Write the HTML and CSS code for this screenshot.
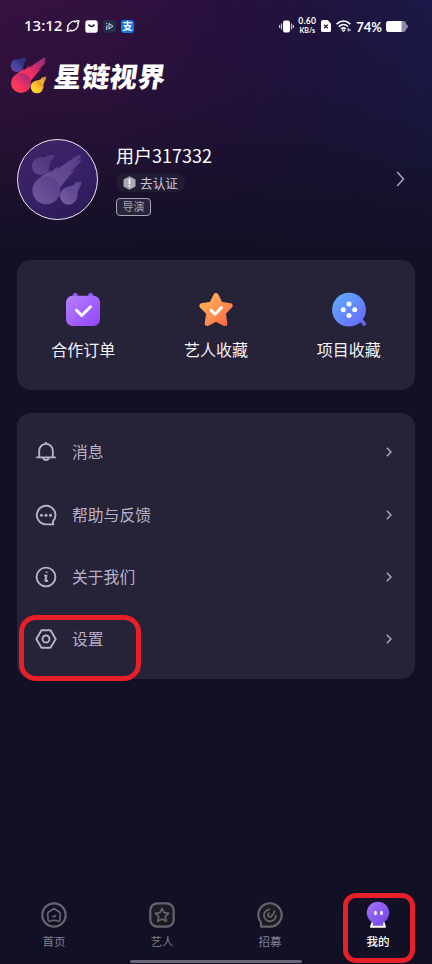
FILE: index.html
```html
<!DOCTYPE html>
<html lang="zh-CN">
<head>
<meta charset="utf-8">
<title>星链视界</title>
<link rel="stylesheet" href="styles.css">
</head>
<body>
<svg class="defs" width="0" height="0">
  <defs>
    <linearGradient id="red" x1="0" y1="1" x2="1" y2="0"><stop offset="0" stop-color="#ff4a4a"/><stop offset=".45" stop-color="#f52f62"/><stop offset="1" stop-color="#8a2c80"/></linearGradient>
    <linearGradient id="blue" x1="0" y1="1" x2="1" y2="0"><stop offset="0" stop-color="#7a3f9a"/><stop offset=".5" stop-color="#4645a5"/><stop offset="1" stop-color="#26206d"/></linearGradient>
    <linearGradient id="yellow" x1="0" y1="1" x2="1" y2="0"><stop offset="0" stop-color="#ffe12c"/><stop offset=".5" stop-color="#ffc52d"/><stop offset="1" stop-color="#c47b28"/></linearGradient>
    <linearGradient id="haze" x1="0" y1="1" x2="1" y2="0"><stop offset="0" stop-color="#8568a8"/><stop offset="1" stop-color="#5b4393"/></linearGradient>
    <linearGradient id="violet" x1="0" y1="0" x2="1" y2="1"><stop offset="0" stop-color="#b680ff"/><stop offset="1" stop-color="#9345fa"/></linearGradient>
    <linearGradient id="indigo" x1="0" y1="0" x2="1" y2="1"><stop offset="0" stop-color="#a873fa"/><stop offset="1" stop-color="#7044e6"/></linearGradient>
    <linearGradient id="orange" x1="0" y1="0" x2="1" y2="1"><stop offset="0" stop-color="#ffb957"/><stop offset="1" stop-color="#ff6948"/></linearGradient>
    <linearGradient id="azure" x1="0" y1="0" x2="1" y2="1"><stop offset="0" stop-color="#5eb0ff"/><stop offset="1" stop-color="#6965fa"/></linearGradient>
    <g id="blue-ball"><path d="M1.2 6.5Q3 2.5 8 2.6Q11 2.5 12.2.7Q14.5 1 16.5.3Q16.8 2.2 15.5 4Q13.5 5.5 13.2 8.5Q13 12.500 9.500 14.300Z"/><circle cx="7" cy="8.700" r="6.300"/></g>
    <g id="red-ball"><path d="M7 16.500L14.500 11.500L13.500 14L19.500 8.500L18.500 11L32.500 1.500Q35 .2 36 1.200L33.500 5L36.300 3.500L34.500 7L27.500 13.500L32.500 10.500L26 17.500L20 25L18 33Z"/><circle cx="11" cy="26" r="10"/></g>
    <g id="yellow-ball"><path d="M23 25.500Q25.500 23.200 28.500 23.200Q31 22.500 32 20.500L36.300 19.600Q36.500 22.500 34.500 24.500Q33 26.500 33.200 31Z"/><circle cx="27" cy="30" r="6.300"/></g>
  </defs>
</svg>
<main class="screen">
  <header class="status">
    <div class="status-left">
      <span class="clock">13:12</span>
      <svg width="14" height="14" viewBox="0 0 14 14" fill="none" stroke="#fff" stroke-width="1.300"><ellipse cx="7" cy="7" rx="5.600" ry="4.200" transform="rotate(-38 7 7)" stroke-dasharray="13 2.500"/><path d="M2.300 9.300Q0 12.500 2 12.300Q3.500 12 5.500 10.800M11.700 4.700Q14 1.600 12 1.700Q10.500 2 8.500 3.200"/></svg>
      <svg width="13" height="13" viewBox="0 0 13 13"><rect x=".3" y=".3" width="12.400" height="12.400" rx="2.800" fill="#fff"/><path d="M3.500 4.500Q6.500 8.500 9.500 4.500" fill="none" stroke="#291137" stroke-width="1.400"/></svg>
      <svg width="13" height="13" viewBox="0 0 13 13"><rect x=".3" y=".3" width="12.400" height="12.400" rx="2" fill="#24304b"/><path d="M3.800 5.500V10M3.800 3V4M6 8.800V3.500L10 6.300L5.500 9" fill="none" stroke="#d5dcea"/></svg>
      <span class="alipay">支</span>
    </div>
    <div class="status-right">
      <svg width="15" height="13" viewBox="0 0 15 13"><rect x="4" y=".5" width="7" height="12" rx="2" fill="#fff"/><path d="M2.500 3.500V9.500M12.500 3.500V9.500M.6 5V8M14.400 5V8" stroke="#c9c2d3" stroke-width="1.200"/></svg>
      <span class="speed"><b>0.60</b><b>KB/s</b></span>
      <svg width="10" height="12" viewBox="0 0 10 12"><path d="M2 0H6.500L10 3.500V10.500Q10 12 8.500 12H1.500Q0 12 0 10.500V2Q0 0 2 0Z" fill="#fff"/><path d="M3.200 4.800L6.800 8.400M6.800 4.800L3.200 8.400" stroke="#24123b" stroke-width="1.300"/></svg>
      <svg class="wifi" width="15" height="12" viewBox="0 0 15 12" fill="none" stroke="#fff" stroke-width="1.600"><path d="M.6 4.200Q7.500-2.200 14.400 4.200M2.800 6.700Q7.500 2.400 12 6.500M5 9Q7.500 6.800 9.800 9"/><path d="M6 10L7.500 11.800L9 10ZM12.200 8V11.500M13.900 9V11" stroke-width="1"/></svg>
      <span class="percent">74%</span>
      <svg width="22" height="11" viewBox="0 0 22 11"><path d="M3 0H17Q20 0 20 3Q22 4 22 5.500Q22 7 20 8Q20 11 17 11H3Q0 11 0 8V3Q0 0 3 0Z" fill="#918aa5"/><path d="M3 0H15.500V11H3Q0 11 0 8V3Q0 0 3 0Z" fill="#fff"/></svg>
    </div>
  </header>

  <div class="brand">
    <svg width="38" height="38" viewBox="0 0 38 38"><use href="#red-ball" fill="url(#red)"/><use href="#blue-ball" fill="url(#blue)"/><use href="#yellow-ball" fill="url(#yellow)"/></svg>
    <h1>星链视界</h1>
  </div>

  <section class="profile">
    <div class="avatar"><svg width="53" height="53" viewBox="0 0 38 38" fill="url(#haze)"><use href="#red-ball" opacity=".8"/><use href="#blue-ball" opacity=".55"/><use href="#yellow-ball" opacity=".9"/></svg></div>
    <div class="identity">
      <div class="username">用户317332</div>
      <div class="verify"><svg width="13" height="14" viewBox="0 0 13 14"><path d="M6.500.3L12.500 3.500V10.500L6.500 13.700L.5 10.500V3.500Z" fill="#aaa8b0"/><path d="M6.500 3V8.200M6.500 9.500V11" stroke="#fff" stroke-width="1.700"/></svg><span>去认证</span></div>
      <div class="role">导演</div>
    </div>
    <svg class="profile-arrow" width="9" height="16" viewBox="0 0 9 16"><path d="M1.200 1L7.500 8L1.200 15"/></svg>
  </section>

  <section class="shortcuts card">
    <div class="shortcut">
      <svg width="36" height="36" viewBox="0 0 36 36"><path d="M7.500 5.500Q7.500.8 10.200.8Q12.500.8 13 4H23Q23.500.8 25.800.8Q28.500.8 28.500 5.500Z" fill="#8c58e8"/><rect x="1" y="3.800" width="34" height="30.200" rx="6.500" fill="url(#violet)"/><path d="M11.500 18.300L16.700 23.500L25.500 14.800" class="tick"/></svg>
      <span>合作订单</span>
    </div>
    <div class="shortcut">
      <svg width="36" height="36" viewBox="0 0 36 36"><path d="M18 3.500L22.400 12.200L32.200 13.800L25.300 20.800L26.800 31.500L18 27L9.200 31.500L10.700 20.800L3.800 13.800L13.600 12.200Z" fill="url(#orange)" stroke="url(#orange)" stroke-width="5" stroke-linejoin="round"/><path d="M13 18.300L17 22.200L23.500 15.500" class="tick"/></svg>
      <span>艺人收藏</span>
    </div>
    <div class="shortcut">
      <svg width="36" height="36" viewBox="0 0 36 36"><path d="M29 27L33.300 32" stroke="#6468f4" stroke-width="3.600" stroke-linecap="round"/><circle cx="18" cy="17.700" r="16.900" fill="url(#azure)"/><g fill="#fff"><circle cx="18" cy="12" r="2.500"/><circle cx="12.300" cy="17.700" r="2.500"/><circle cx="23.700" cy="17.700" r="2.500"/><circle cx="18" cy="23.400" r="2.500"/></g></svg>
      <span>项目收藏</span>
    </div>
  </section>

  <nav class="menu card">
    <div class="row"><svg class="icon" viewBox="0 0 22 22"><path d="M4.200 16V9.700A6.800 6.800 0 0 1 17.800 9.700V16M1.200 16.400H20.800M8.300 17A2.800 2.800 0 0 0 13.700 17M11 1V3"/></svg><span>消息</span><svg class="chevron" viewBox="0 0 6 10"><path d="M.8.8L5 5L.8 9.200"/></svg></div>
    <div class="row"><svg class="icon" viewBox="0 0 22 22"><path d="M17.800 17.600A9.300 9.300 0 1 0 11 20.400H18.200Z"/><g class="dots"><circle cx="6.500" cy="11.200" r="1.500"/><circle cx="11" cy="11.200" r="1.500"/><circle cx="15.500" cy="11.200" r="1.500"/></g></svg><span>帮助与反馈</span><svg class="chevron" viewBox="0 0 6 10"><path d="M.8.8L5 5L.8 9.200"/></svg></div>
    <div class="row"><svg class="icon" viewBox="0 0 22 22"><circle cx="11" cy="11" r="9.400"/><path d="M9.100 9.600H11.400L10.300 14.500Q10.300 15.500 13 14.500M11.500 5.700L11.700 6.900"/></svg><span>关于我们</span><svg class="chevron" viewBox="0 0 6 10"><path d="M.8.8L5 5L.8 9.200"/></svg></div>
    <div class="row"><svg class="icon" viewBox="0 0 22 22"><path d="M6.500 2.300H15.500L20.700 11L15.500 19.700H6.500L1.300 11Z" stroke-linejoin="round"/><circle cx="11" cy="11" r="3.500"/></svg><span>设置</span><svg class="chevron" viewBox="0 0 6 10"><path d="M.8.8L5 5L.8 9.200"/></svg></div>
    <div class="mark mark-settings"></div>
  </nav>

  <footer class="tabs">
    <div class="tab"><svg viewBox="0 0 28 28"><circle cx="14" cy="14" r="11.700" class="outer"/><path d="M14 7.500L19.700 11.300Q20.500 12 20.300 13L19.800 19.500Q19.700 20.500 18.500 20.500Q16.200 19.300 14 19.500Q11.800 19.300 9.500 20.500Q8.300 20.500 8.200 19.500L7.700 13Q7.500 12 8.300 11.300ZM12.200 15.300Q14.500 16.500 16 14"/></svg><span>首页</span></div>
    <div class="tab"><svg viewBox="0 0 28 28"><rect x="2.300" y="2.300" width="23.400" height="23.400" rx="7" class="outer dark"/><path d="M14 7.500L16 11.600L20.600 12.300L17.300 15.500L18.100 20.300L14 18.100L9.900 20.300L10.700 15.500L7.400 12.300L12 11.600Z" stroke-linejoin="round"/></svg><span>艺人</span></div>
    <div class="tab"><svg viewBox="0 0 28 28"><path d="M5 21.500A11.700 11.700 0 1 1 14 25.700H5.500Q4.500 25.500 5 24.500Z" class="outer dark"/><path d="M14 8.300A6 6 0 1 0 20 14M14 12A2 2 0 1 0 16 14Q18.300 13 18.500 9.500"/></svg><span>招募</span></div>
    <div class="tab active"><svg viewBox="0 0 28 28"><path d="M8.500 21.500L7 25.800H21L19.500 21.500Z" fill="#8054ed" stroke="#fff" stroke-width="2" stroke-linejoin="round"/><path d="M8.800 23V21.800A11.200 11.200 0 1 1 19.200 21.800V23Z" fill="url(#indigo)" stroke="none"/><ellipse cx="11.500" cy="12" rx="1.300" ry="2.200" fill="#fff" stroke="none"/><ellipse cx="17.500" cy="12" rx="1.300" ry="2.200" fill="#fff" stroke="none"/></svg><span>我的</span><div class="mark mark-mine"></div></div>
  </footer>
  <div class="home-bar"></div>
</main>
</body>
</html>
```

FILE: styles.css
```css
* { box-sizing: border-box; }
body {
  margin: 0;
  background: #121025;
  color: #fff;
  font-family: "Noto Sans", "Noto Sans CJK SC", sans-serif;
}
svg { display: block; flex: none; }
.defs { position: absolute; }
.screen {
  width: 432px;
  height: 964px;
  overflow: hidden;
  display: flex;
  flex-direction: column;
  background:
    linear-gradient(180deg, rgba(18, 16, 37, 0) 0, rgba(18, 16, 37, .22) 90px, #121025 250px),
    linear-gradient(90deg, #36113f 0, #32113f 25%, #27103e 52%, #20133f 72%, #1b1948 100%);
}
.status {
  height: 52px;
  padding: 0 24px;
  display: flex;
  justify-content: space-between;
}
.status-left, .status-right { display: flex; align-items: center; }
.status-left { gap: 5px; }
.clock { width: 37px; font: 500 15px/20px "Noto Sans", sans-serif; white-space: nowrap; margin-top: -2px; }
.alipay {
  width: 13px; height: 13px; border-radius: 3px;
  background: #1476ef;
  font: 700 10px/12px "Noto Sans CJK SC", sans-serif;
  text-align: center;
}
.speed {
  display: flex; flex-direction: column; align-items: center;
  width: 20px; margin: -1px 4px 0 3px;
}
.speed b { font: 700 7px/8px Lato, sans-serif; white-space: nowrap; }
.speed b:first-child { font-size: 8.500px; line-height: 9px; letter-spacing: .3px; }
.wifi { margin-left: 5px; }
.percent { margin: 0 4px 0 5px; font: 700 13px/18px Lato, sans-serif; padding-top: 1px; }
.brand { height: 48px; padding: 5px 10px 0; display: flex; }
.brand h1 {
  margin: -1px 0 0 6px;
  font: 900 27.500px/38px "Noto Sans CJK SC", sans-serif;
  letter-spacing: .4px;
  transform: skewX(-8deg);
}
.profile { height: 160px; display: flex; padding: 39px 27px 0 17px; }
.avatar {
  width: 81px; height: 81px;
  padding: 14px 0 0 13px;
  border: 1.500px solid #eee8f5;
  border-radius: 50%;
  background: linear-gradient(150deg, #412365, #342064 60%, #29194f);
}
.identity { margin-left: 18px; padding-top: 3px; flex: 1; display: flex; flex-direction: column; align-items: flex-start; }
.username { font: 400 18px/26px "Noto Sans CJK SC", sans-serif; }
.verify {
  width: 69px; height: 19px; margin-top: 5px; padding-left: 7px;
  display: flex; align-items: center; gap: 4px;
  border-radius: 10px;
  background: #211d34;
  color: #c9c5d6;
  font: 12.700px/18px "Noto Sans CJK SC", sans-serif;
}
.role {
  width: 35px; height: 18px; margin-top: 6px;
  border: 1px solid #a9a3bb; border-radius: 4px;
  background: #282439;
  color: #aaa5bb;
  font: 11px/15px "Noto Sans CJK SC", sans-serif;
  text-align: center;
}
.profile-arrow { margin-top: 32px; }
.profile-arrow path, .chevron path { fill: none; stroke: #aaa4bb; stroke-width: 1.500; }
.card { margin: 0 17px; border-radius: 14px; background: #262238; }
.shortcuts { height: 130px; padding-top: 32px; display: grid; grid-template-columns: repeat(3, 1fr); }
.shortcut {
  display: flex; flex-direction: column; align-items: center; gap: 9px;
  font: 16px/24px "Noto Sans CJK SC", sans-serif;
}
.shortcut span { color: #f5f3fa; }
.tick { fill: none; stroke: #fff; stroke-width: 3; stroke-linecap: round; stroke-linejoin: round; }
.menu { position: relative; height: 266px; margin-top: 23px; padding-top: 8px; }
.row {
  height: 62.400px; padding: 0 23px 0 18px;
  display: flex; align-items: center;
  color: #b8b2c8;
  font: 15.800px/24px "Noto Sans CJK SC", sans-serif;
}
.row span { flex: 1; margin-left: 15px; }
.icon { width: 22px; height: 22px; fill: none; stroke: #b8b2ca; stroke-width: 1.900; }
.dots { fill: #b8b2ca; stroke: none; }
.chevron { width: 6px; height: 10px; }
.mark { position: absolute; border: 5px solid #e61f28; }
.mark-settings { left: 2px; top: 202px; width: 122px; height: 66px; border-radius: 17px; }
.tabs { height: 68px; margin-top: 222px; display: grid; grid-template-columns: repeat(4, 1fr); }
.tab {
  position: relative;
  display: flex; flex-direction: column; align-items: center;
  color: #83808f;
  font: 11.500px/18px "Noto Sans CJK SC", sans-serif;
}
.tab svg { width: 28px; height: 28px; margin-bottom: 3px; fill: none; stroke: #666370; stroke-width: 1.700; }
.tab .outer { stroke-width: 2.200; }
.tab .dark { fill: #1c1b20; }
.tab.active { color: #fff; font-weight: 500; }
.mark-mine { left: 19px; top: -8px; width: 72px; height: 70px; border-radius: 13px; }
.home-bar { width: 172px; height: 3px; margin: -9px auto 0; border-radius: 2px; background: #686575; position: relative; }
```
